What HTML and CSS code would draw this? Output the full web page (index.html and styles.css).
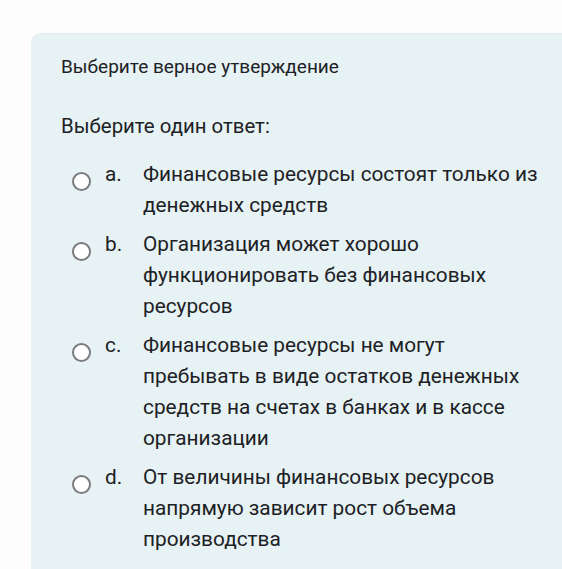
FILE: index.html
```html
<!DOCTYPE html>
<html lang="ru">
<head>
    <meta charset="UTF-8">
    <title>Вопрос</title>
    <link rel="stylesheet" href="styles.css">
</head>
<body>
<div class="que">
    <div class="qtext">Выберите верное утверждение</div>
    <div class="prompt">Выберите один ответ:</div>
    <div class="answer">
        <div class="opt">
            <span class="radio"></span>
            <span class="letter">a.</span>
            <span class="label">Финансовые ресурсы состоят только из денежных средств</span>
        </div>
        <div class="opt">
            <span class="radio"></span>
            <span class="letter">b.</span>
            <span class="label">Организация может хорошо функционировать без финансовых ресурсов</span>
        </div>
        <div class="opt">
            <span class="radio"></span>
            <span class="letter">c.</span>
            <span class="label">Финансовые ресурсы не могут пребывать в виде остатков денежных средств на счетах в банках и в кассе организации</span>
        </div>
        <div class="opt">
            <span class="radio"></span>
            <span class="letter">d.</span>
            <span class="label">От величины финансовых ресурсов напрямую зависит рост объема производства</span>
        </div>
    </div>
</div>
</body>
</html>
```

FILE: styles.css
```css
*{
    margin:0;
    padding:0;
    box-sizing: border-box;
}
body{
    background: #fdfdfd;
    font-family: Roboto, "Noto Sans", sans-serif;
    color: #1d2125;
    overflow: hidden;
}
.que{
    margin: 33px 0 0 31px;
    padding: 21px 0 30px 30px;
    min-height: 560px;
    background: #e6f2f4;
    border-top: 1px solid #e3eced;
    border-radius: 10px 0 0 0;
}
.qtext{
    font-size: 19px;
    line-height: 24px;
}
.prompt{
    margin-top: 34px;
    font-size: 20.4px;
    line-height: 26px;
}
.answer{
    margin-top: 20px;
    padding-left: 11px;
}
.opt{
    display: flex;
    align-items: flex-start;
    font-size: 20.8px;
    line-height: 31px;
    margin-bottom: 8px;
}
.radio{
    flex: none;
    width: 19px;
    height: 19px;
    margin-top: 13px;
    border: 2px solid #7a7c7f;
    border-radius: 50%;
    background: #fff;
}
.letter{
    flex: none;
    width: 38px;
    margin-left: 14px;
}
.label{
    width: 405px;
}
```
